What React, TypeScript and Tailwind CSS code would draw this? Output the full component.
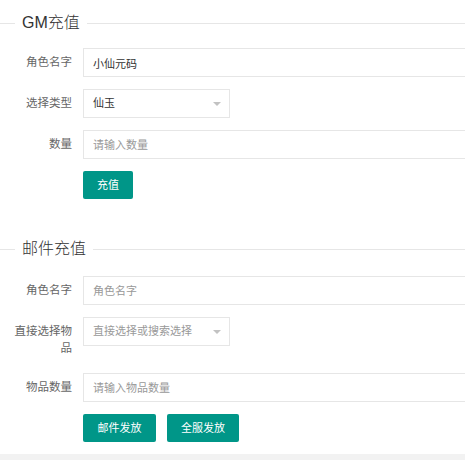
import React from "react";

const font = { fontFamily: '"Liberation Sans", "Noto Sans CJK SC", sans-serif' };

function Legend({ title, className }: { title: string; className?: string }) {
  return (
    <div className={`flex items-center h-[22px] ${className ?? ""}`}>
      <div className="w-[15px] h-px bg-[#e6e6e6]" />
      <span className="px-[7px] text-[16px] leading-[22px] font-light text-[#333]">{title}</span>
      <div className="flex-1 h-px bg-[#e6e6e6]" />
    </div>
  );
}

function Row({ label, children, className }: { label: string; children: React.ReactNode; className?: string }) {
  return (
    <div className={`flex items-start ${className ?? "mb-[12px]"}`}>
      <label className="w-[83px] shrink-0 pl-[10px] pr-[11px] py-[6px] text-right text-[11.5px] leading-[17px] text-[#666]">
        {label}
      </label>
      {children}
    </div>
  );
}

function Input({ value, placeholder }: { value?: string; placeholder?: string }) {
  return (
    <input
      readOnly
      defaultValue={value}
      placeholder={placeholder}
      className="block w-[420px] shrink-0 h-[29px] border border-[#e6e6e6] bg-white pl-[9px] text-[11px] text-[#333] placeholder:text-[#999] outline-none"
    />
  );
}

function Select({ value, placeholder }: { value?: string; placeholder?: string }) {
  return (
    <div className="relative w-[147px] h-[29px] border border-[#e6e6e6] bg-white flex items-center pl-[9px] text-[11px]">
      <span className={value ? "text-[#333]" : "text-[#999]"}>{value ?? placeholder}</span>
      <span className="absolute right-[8px] top-[12px] w-0 h-0 border-l-[4px] border-r-[4px] border-t-[4px] border-l-transparent border-r-transparent border-t-[#c2c2c2]" />
    </div>
  );
}

function Button({ children, w }: { children: React.ReactNode; w: string }) {
  return (
    <button className={`${w} h-[28px] rounded-[2px] bg-[#009688] text-white text-[11px] flex items-center justify-center`}>
      {children}
    </button>
  );
}

export default function App() {
  return (
    <div className="w-[465px] h-[460px] overflow-hidden bg-[#f2f2f2]" style={font}>
      <div className="bg-white pt-[12px] pb-[12px]">
        <Legend title="GM充值" className="mb-[14px]" />
        <Row label="角色名字">
          <Input value="小仙元码" />
        </Row>
        <Row label="选择类型">
          <Select value="仙玉" />
        </Row>
        <Row label="数量">
          <Input placeholder="请输入数量" />
        </Row>
        <div className="pl-[83px]">
          <Button w="w-[50px]">充值</Button>
        </div>

        <Legend title="邮件充值" className="mt-[39px] mb-[16px]" />
        <Row label="角色名字" className="mb-[12px]">
          <Input placeholder="角色名字" />
        </Row>
        <Row label="直接选择物品" className="mb-[10px]">
          <Select placeholder="直接选择或搜索选择" />
        </Row>
        <Row label="物品数量">
          <Input placeholder="请输入物品数量" />
        </Row>
        <div className="pl-[83px] flex gap-[11px]">
          <Button w="w-[73px]">邮件发放</Button>
          <Button w="w-[72px]">全服发放</Button>
        </div>
      </div>
    </div>
  );
}
